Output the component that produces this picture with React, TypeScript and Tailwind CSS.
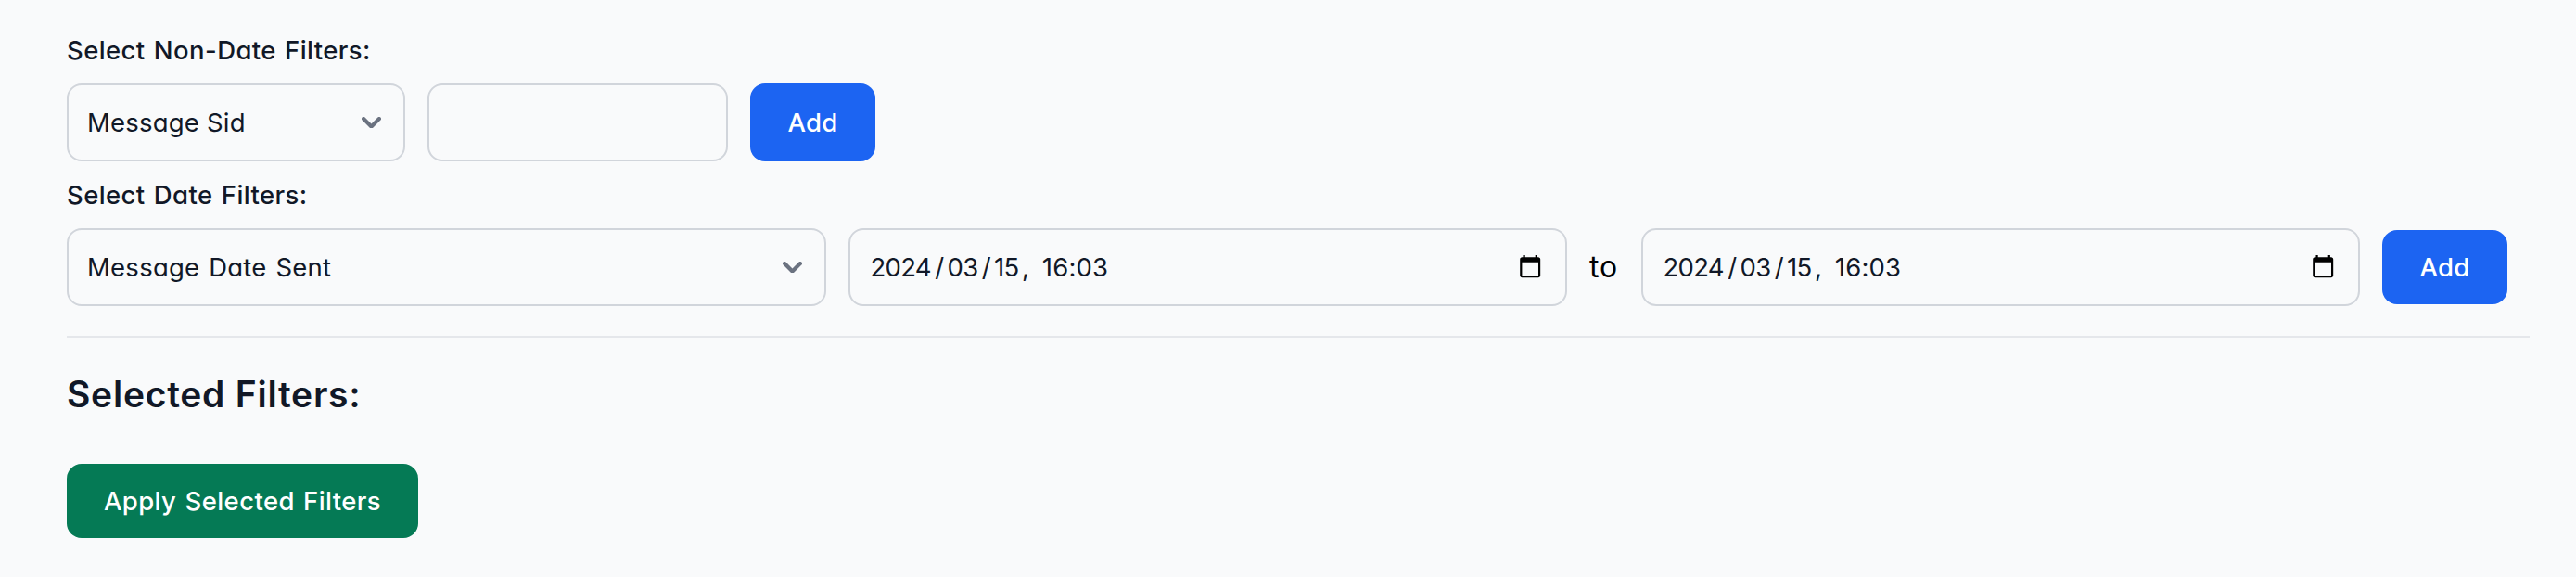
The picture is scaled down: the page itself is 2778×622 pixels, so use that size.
import type { ReactNode } from "react";

const FIELD =
  "flex shrink-0 items-center justify-between rounded-[16px] border-2 border-[#d1d5db] bg-[#f9fafb] h-[84px] text-[27.5px] leading-10 text-[#111827]";

function Chevron() {
  return (
    <svg className="h-[12.6px] w-[21px]" viewBox="0 0 10 6" fill="none">
      <path d="m1 1 4 4 4-4" stroke="#6B7280" strokeWidth="2" strokeLinecap="round" strokeLinejoin="round" />
    </svg>
  );
}

function CalendarIcon() {
  return (
    <svg className="mb-[2px] size-[26.4px]" viewBox="0 0 24 24" fill="#000">
      <path d="M20 3h-1V1h-2v2H7V1H5v2H4c-1.1 0-2 .9-2 2v16c0 1.1.9 2 2 2h16c1.1 0 2-.9 2-2V5c0-1.1-.9-2-2-2zm0 18H4V8h16v13z" />
    </svg>
  );
}

function DateField() {
  return (
    <div className={`${FIELD} w-[775px] pl-[21.5px] pr-[24.8px]`}>
      <span className="whitespace-pre tracking-[-0.7px]">
        <span>2024</span>
        <span className="mx-[4.2px]">/</span>
        <span>03</span>
        <span className="mx-[4.2px]">/</span>
        <span>15</span>
        <span className="ml-[3.5px] mr-[6.5px]">,</span>
        <span className="tracking-[0.2px]"> 16:03</span>
      </span>
      <CalendarIcon />
    </div>
  );
}

function AddButton({ className }: { className: string }) {
  return (
    <button
      className={`${className} w-[135px] shrink-0 rounded-[16px] bg-[#1c64f2] text-[27.5px] font-medium leading-10 tracking-[0.3px] text-white`}
    >
      Add
    </button>
  );
}

function Label({ children }: { children: ReactNode }) {
  return (
    <div className="mb-4 h-10 whitespace-nowrap text-[27.5px] font-medium leading-10 tracking-[0.4px] text-[#111827] [word-spacing:1.5px]">
      {children}
    </div>
  );
}

export default function App() {
  return (
    <div className="h-[622px] w-[2778px] bg-[#f9fafb] pl-[72px] pr-[50px] pt-[34px] font-['Inter',sans-serif] [font-feature-settings:'cv11']">
      <Label>Select Non-Date Filters:</Label>
      <div className="mb-4 flex items-center gap-6">
        <div className={`${FIELD} w-[365px] pl-5 pr-6`}>
          <span className="tracking-[0.2px]">Message Sid</span>
          <Chevron />
        </div>
        <div className={`${FIELD} w-[324px]`} />
        <AddButton className="h-[84px]" />
      </div>

      <Label>Select Date Filters:</Label>
      <div className="flex items-center gap-6">
        <div className={`${FIELD} w-[819px] pl-5 pr-6`}>
          <span className="tracking-[0.25px] [word-spacing:1.8px]">Message Date Sent</span>
          <Chevron />
        </div>
        <DateField />
        <span className="w-8 shrink-0 text-[32px] leading-10 tracking-[0.8px] text-black">to</span>
        <DateField />
        <AddButton className="h-20" />
      </div>

      <div className="mt-8 h-0.5 bg-[#e5e7eb]" />

      <h2 className="mt-[33px] h-14 whitespace-nowrap text-[39px] font-semibold leading-[56px] tracking-[0.75px] text-[#111827]">
        Selected Filters:
      </h2>
      <button className="mt-[47px] h-20 w-[379px] whitespace-nowrap rounded-[16px] bg-[#057a55] text-[27.5px] font-medium leading-10 tracking-[0.4px] text-white [word-spacing:1.5px]">
        Apply Selected Filters
      </button>
    </div>
  );
}
